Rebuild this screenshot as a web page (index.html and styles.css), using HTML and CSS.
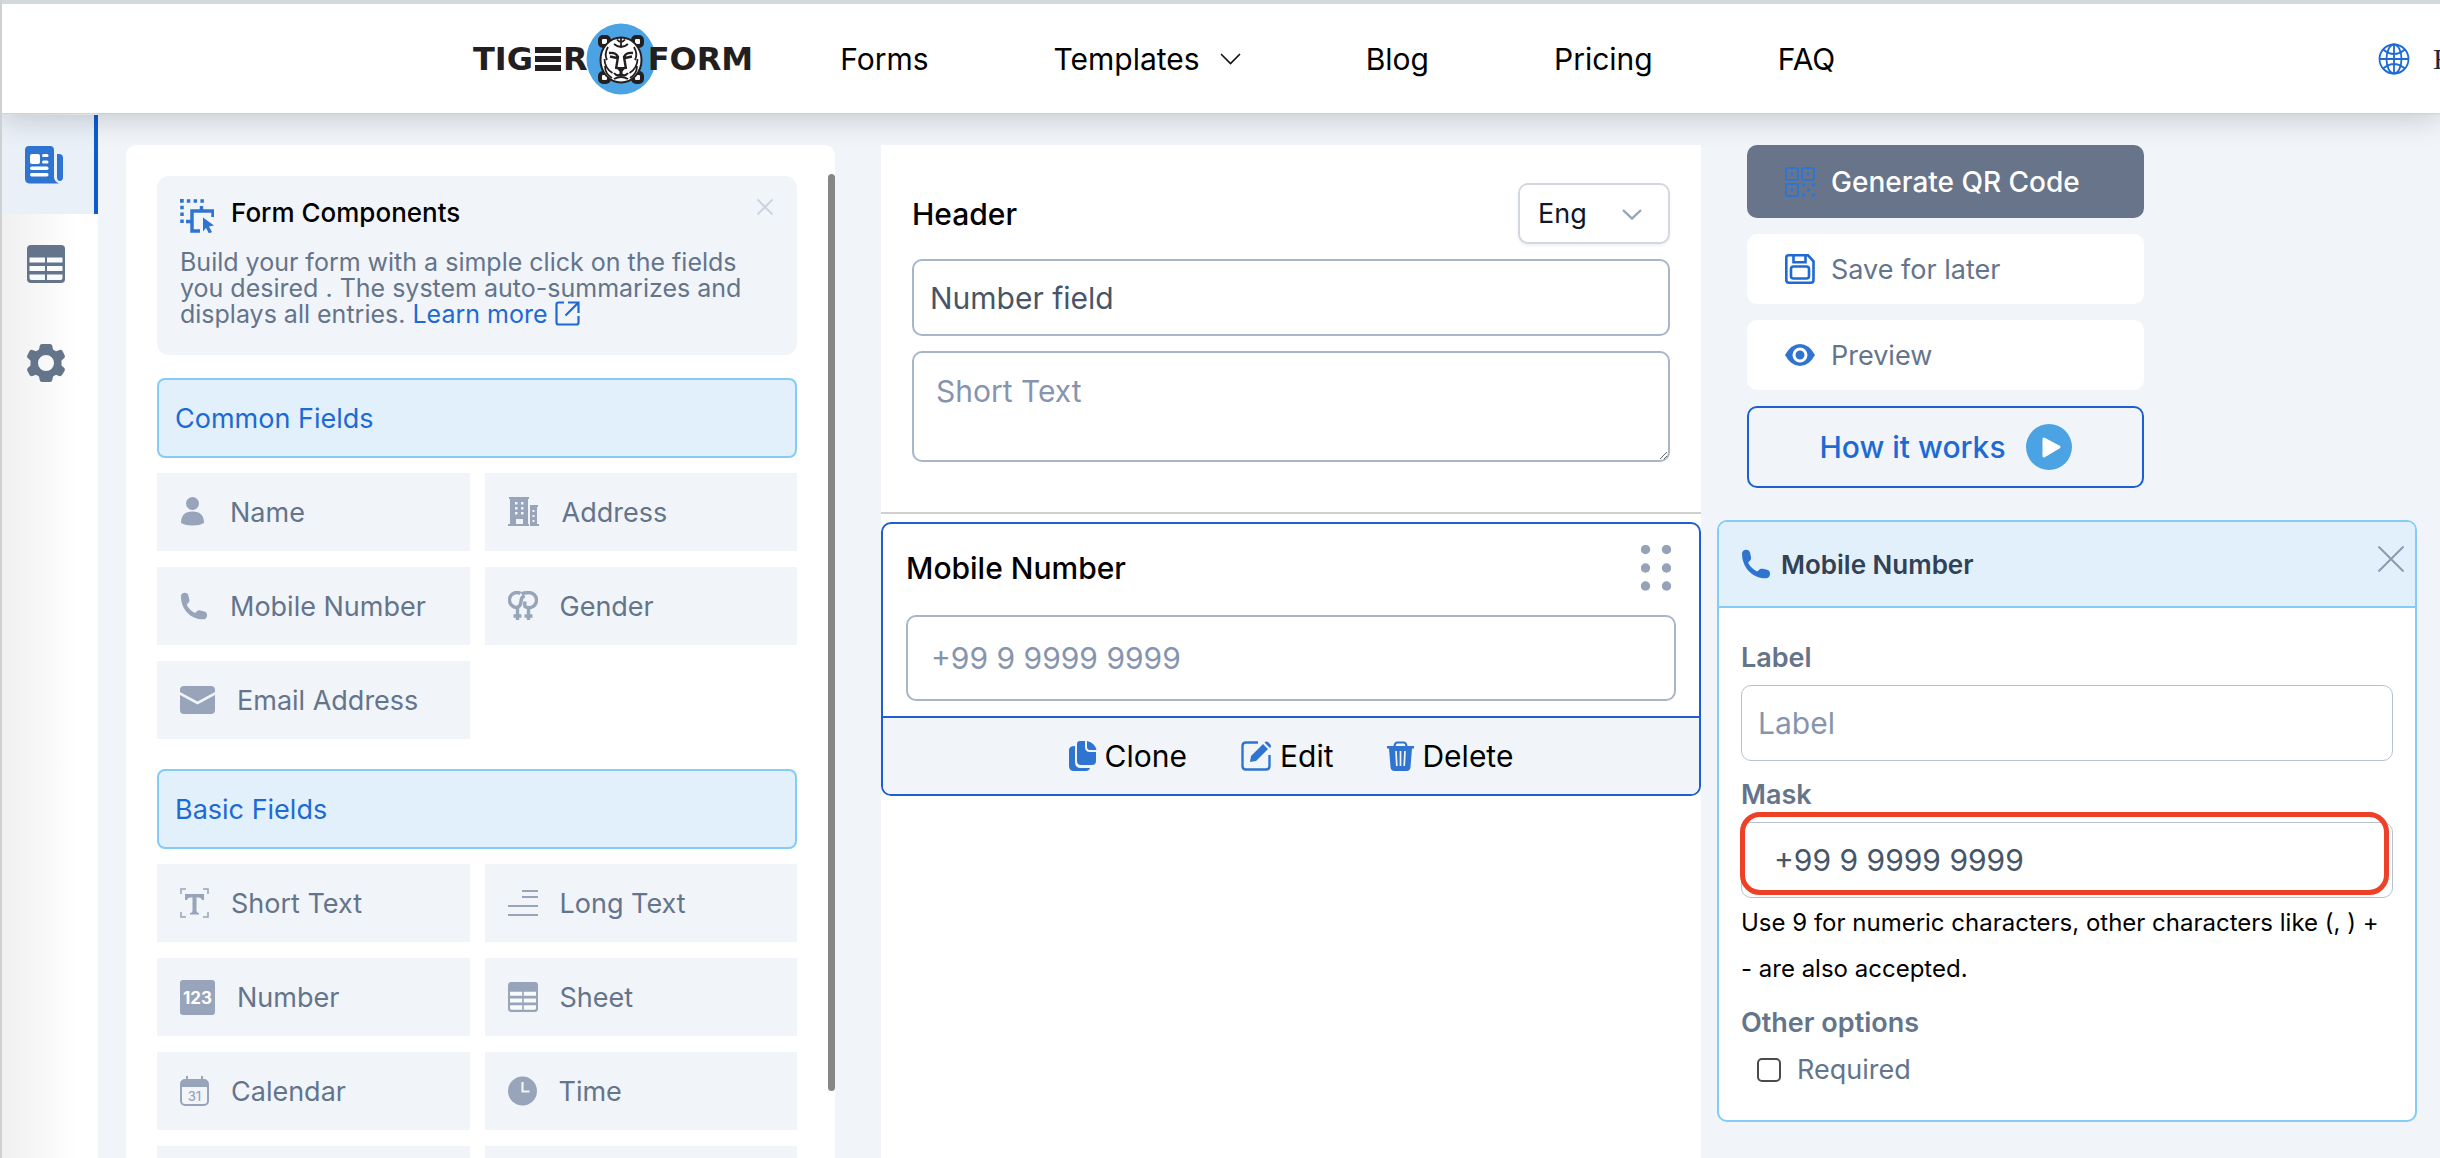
FILE: index.html
```html
<!DOCTYPE html>
<html lang="en">
<head>
    <meta charset="UTF-8">
    <meta name="viewport" content="width=device-width, initial-scale=1.0">
    <title>TIGER FORM</title>
    <link rel="stylesheet" href="styles.css">
</head>
<body>
    <svg class="sprite" aria-hidden="true">
        <symbol id="phone" viewBox="0 0 30 30">
            <path d="M1 4.500C1 2 3 .7 5 .7c2.500 0 3.500 1 4 3l1 4.300c.4 2-.3 3.300-2 4.500-.8.600-.8 1.300-.3 2.200 1.800 3 4.300 5.500 7.500 7.300.9.500 1.600.3 2.200-.5 1.200-1.600 2.600-2.200 4.600-1.700l4 1c2 .5 3 1.700 3 4 0 2.800-1.500 4.500-4.500 4.500C11 29.300 1 18 1 4.500z" fill="currentColor"/>
        </symbol>
        <symbol id="table" viewBox="0 0 38 38">
            <rect width="38" height="38" rx="4" fill="currentColor"/>
            <path d="M2.500 12.500h15.500v5H2.500zM20 12.500h15.500v5H20zM2.500 21h15.500v5H2.500zM20 21h15.500v5H20zM2.500 29.500h15.500v5.500H4.500q-2 0-2-2zM20 29.500h15.500v3.500q0 2-2 2H20z" fill="#f8fafc"/>
        </symbol>
    </svg>

    <header class="topbar">
        <a class="logo" href="#">
            <span>TIG</span>
            <svg class="logo-bars" width="26" height="24" viewBox="0 0 26 24" fill="#231f20"><path d="M0 0h26v6H0zM0 9h26v6H0zM0 18h26v6H0z"/></svg>
            <span>R</span>
            <svg class="logo-tiger" width="70" height="72" viewBox="0 0 70 72">
                <ellipse cx="35" cy="36" rx="34.500" ry="35.500" fill="#4ba3e3"/>
                <g fill="#fff" stroke="#231f20" stroke-width="4">
                    <rect x="14" y="14" width="9" height="9" rx="3"/><rect x="47" y="14" width="9" height="9" rx="3"/>
                    <rect x="14" y="50" width="9" height="9" rx="3"/><rect x="47" y="50" width="9" height="9" rx="3"/>
                </g>
                <ellipse cx="35" cy="37" rx="20.500" ry="22.500" fill="#fff" stroke="#231f20" stroke-width="2"/>
                <path d="M35 15v9M31 16.500q4 5 8 0M28 21q7 6 14 0M19 43q0 8 7 12M51 43q0 8-7 12M18.500 36q0 9 8 14M51.500 36q0 9-8 14M22 24q-4 7-1 13M48 24q4 7 1 13" fill="none" stroke="#231f20" stroke-width="1.800"/>
                <path d="M23 30q7-1 9 4l-2 12M47 30q-7-1-9 4l2 12M24 33.500l7 1.500M46 33.500l-7 1.500" fill="none" stroke="#231f20" stroke-width="2.400"/>
                <path d="M29.500 44h11l-4 4.500v3h-3v-3z" fill="#231f20"/>
                <path d="M28 50q3 4 7 1 4 3 7-1M28 56q7-4 14 0" fill="none" stroke="#231f20" stroke-width="2"/>
            </svg>
            <span>FORM</span>
        </a>
        <nav class="menu">
            <a href="#">Forms</a>
            <a href="#">Templates <svg width="21" height="12" viewBox="0 0 21 12" fill="none" stroke="#111" stroke-width="1.600"><path d="M1 1l9.500 9.500L20 1"/></svg></a>
            <a href="#">Blog</a>
            <a href="#">Pricing</a>
            <a href="#">FAQ</a>
        </nav>
        <a class="language" href="#">
            <svg width="32" height="32" viewBox="0 0 32 32" fill="none" stroke="#1d6ad4" stroke-width="1.800"><circle cx="16" cy="16" r="14.500"/><ellipse cx="16" cy="16" rx="7.500" ry="14.500"/><path d="M16 1.500v29M1.500 16h29M5 6.500q11 9 22 0M5 25.500q11-9 22 0"/></svg>
            <span>English</span>
        </a>
    </header>

    <main class="workspace">
        <aside class="sidebar">
            <button class="side-item active" aria-label="Form builder">
                <svg width="38" height="38" viewBox="0 0 38 38" fill="#2f74d0"><path d="M4 0h21q4 0 4 4v27q0 4 5 6.500H5q-5 0-5-5V4q0-4 4-4z"/><path d="M32 8h2q4 0 4 4v19q0 4-3 4t-3-4z"/><g fill="#fff"><rect x="5" y="8" width="10" height="10" rx="2"/><rect x="17" y="8" width="6.500" height="3" rx="1.500"/><rect x="17" y="14.500" width="6.500" height="3" rx="1.500"/><rect x="5" y="20.500" width="18.500" height="3.500" rx="1.700"/><rect x="5" y="27" width="18.500" height="3.500" rx="1.700"/></g></svg>
            </button>
            <button class="side-item" aria-label="Entries"><svg width="38" height="38"><use href="#table"/></svg></button>
            <button class="side-item" aria-label="Settings">
                <svg width="38" height="38" viewBox="0 0 38 38"><path fill="currentColor" fill-rule="evenodd" d="M15 0h8q2 0 2.300 2l.7 3.500 3 1.700 3.500-1.200q2-.6 3 1l2 4q1 2-.5 3.200L34.500 16.500v5l2.500 2.300q1.500 1.200.5 3.200l-2.500 4q-1 1.600-3 1L29 30.800l-3 1.700-.7 3.500q-.3 2-2.300 2h-8q-2 0-2.300-2l-.7-3.500-3-1.700L5.500 32q-2 .6-3-1l-2-4q-1-2 .5-3.200l2.500-2.300v-5L1 14.200Q-.5 13 .5 11l2-4q1-1.600 3-1L9 7.200l3-1.700.7-3.500Q13 0 15 0zM19 11a8 8 0 1 0 0 16 8 8 0 1 0 0-16z"/></svg>
            </button>
        </aside>

        <section class="components">
            <div class="scroll-thumb"></div>
            <div class="intro">
                <div class="intro-head">
                    <svg width="34" height="34" viewBox="0 0 34 34"><g fill="none" stroke="#2f74d0" stroke-width="3.500"><path d="M0 2h24M2 0v24" stroke-dasharray="3.500 3.300"/><path d="M21.500 7v5M6 22.500h5M33 18v-6H12v20h8"/></g><path d="M23 18.500l11 8-5 1 3 5.500-3 1.500-3-5.500-3 3.500z" fill="#2f74d0"/></svg>
                    <h2>Form Components</h2>
                    <button class="close" aria-label="Close"><svg width="16" height="16" viewBox="0 0 16 16" stroke="#cbd5e1" stroke-width="2"><path d="M.5.500l15 15M15.500.500l-15 15"/></svg></button>
                </div>
                <p>Build your form with a simple click on the fields you desired . The system auto-summarizes and displays all entries. <a href="#">Learn more <svg width="25" height="25" viewBox="0 0 25 25" fill="none" stroke="#1d6ad4" stroke-width="2.200"><path d="M9 1.500H3.500q-2 0-2 2V21.500q0 2 2 2h18q2 0 2-2V15M13 1.500h10.500V12M23 2L10.500 14.500"/></svg></a></p>
            </div>

            <h3 class="group-title">Common Fields</h3>
            <div class="tiles">
                <button><svg width="28" height="30" viewBox="0 0 28 30" fill="currentColor"><circle cx="12.500" cy="6.500" r="6.500"/><path d="M1 26q0-11.500 11.500-11.500T24 26q-4.500 2.500-11.500 2.500T1 26z"/></svg>Name</button>
                <button><svg width="32" height="30" viewBox="0 0 32 30"><path d="M1 0h20v2h-1v25h1v2H0v-2h2V2H1zM22 8h8v2h-1v17h2v2h-9z" fill="currentColor"/><path d="M7 5h2.500v2.500H7zM13 5h2.500v2.500H13zM7 10h2.500v2.500H7zM13 10h2.500v2.500H13zM7 15h2.500v2.500H7zM13 15h2.500v2.500H13zM8 22h7v5H8zM24.500 13h2v2h-2zM24.500 18h2v2h-2zM24.500 23h2v2h-2z" fill="#f1f5f9"/></svg>Address</button>
                <button><svg width="28" height="30"><use href="#phone"/></svg>Mobile Number</button>
                <button><svg width="30" height="30" viewBox="0 0 30 30" fill="none" stroke="currentColor" stroke-width="3.400"><path d="M12.500 2.400A7.500 7.500 0 1 0 9.500 16.500Q13 14.500 13 10.500T16.500 4.500"/><path d="M13.500 2.800Q15.500 1.800 19.500 1.800A7.500 7.500 0 1 1 17 15.500Q16.500 14 17 10.500"/><path d="M9.500 16v13M20.500 16v13M5.500 25h8M16.500 25h8"/></svg>Gender</button>
                <button><svg width="35" height="30" viewBox="0 0 35 30" fill="currentColor"><path d="M4 1h27q4 0 4 4v2L17.500 16.500 0 7V5q0-4 4-4zM0 10l17.500 9.500L35 10v15q0 4-4 4H4q-4 0-4-4z"/></svg>Email Address</button>
            </div>

            <h3 class="group-title">Basic Fields</h3>
            <div class="tiles">
                <button><svg width="29" height="30" viewBox="0 0 29 30"><path d="M6 1H1v5M23 1h5v5M1 24v5h5M28 24v5h-5" fill="none" stroke="currentColor" stroke-width="1.500"/><path d="M5 6h19v6h-2q-.5-2.500-3-2.500h-2.500V23q0 2 2.500 2v1.500h-9V25q2.500 0 2.500-2V9.500H10Q7.500 9.500 7 12H5z" fill="currentColor"/></svg>Short Text</button>
                <button><svg width="30" height="30" viewBox="0 0 30 30" stroke="currentColor" stroke-width="2"><path d="M14 3h16M14 9h16M0 18h30M0 27h30"/></svg>Long Text</button>
                <button><svg width="35" height="35" viewBox="0 0 35 35"><rect width="35" height="35" rx="3" fill="currentColor"/><text x="17.500" y="24" text-anchor="middle" class="icon-number">123</text></svg>Number</button>
                <button><svg width="30" height="30"><use href="#table"/></svg>Sheet</button>
                <button><svg width="29" height="30" viewBox="0 0 29 30"><rect x="1" y="4" width="27" height="25" rx="4" fill="none" stroke="currentColor" stroke-width="2"/><path d="M1 11V7q0-3 3-3h21q3 0 3 3v4zM6 0h2v5H6zM21 0h2v5h-2z" fill="currentColor"/><text x="14.500" y="25" text-anchor="middle" class="icon-date">31</text></svg>Calendar</button>
                <button><svg width="29" height="30" viewBox="0 0 29 30"><circle cx="14.500" cy="15" r="14.500" fill="currentColor"/><path d="M14.500 6v9.500h7" fill="none" stroke="#f1f5f9" stroke-width="2.200"/></svg>Time</button>
                <button></button>
                <button></button>
            </div>
        </section>

        <section class="form-canvas">
            <div class="form-head">
                <div class="form-head-row">
                    <label for="form-title">Header</label>
                    <div class="select-wrap">
                        <select aria-label="Form language"><option>Eng</option></select>
                        <svg width="20" height="11" viewBox="0 0 20 11" fill="none" stroke="#94a3b8" stroke-width="2.400"><path d="M1 1l9 8.500L19 1"/></svg>
                    </div>
                </div>
                <input type="text" id="form-title" value="Number field">
                <textarea placeholder="Short Text" aria-label="Description"></textarea>
            </div>
            <div class="field-card">
                <div class="field-body">
                    <div class="field-title">
                        <label for="mobile">Mobile Number</label>
                        <svg width="30" height="46" viewBox="0 0 30 46" fill="#94a3b8"><circle cx="4.500" cy="4.500" r="4.700"/><circle cx="25.500" cy="4.500" r="4.700"/><circle cx="4.500" cy="23" r="4.700"/><circle cx="25.500" cy="23" r="4.700"/><circle cx="4.500" cy="41" r="4.700"/><circle cx="25.500" cy="41" r="4.700"/></svg>
                    </div>
                    <input type="text" id="mobile" placeholder="+99 9 9999 9999">
                </div>
                <div class="field-actions">
                    <button><svg width="28" height="30" viewBox="0 0 28 30" fill="#2f74d0"><path d="M6 5v16q0 6 6 6h9q-1 3-4 3H5q-5 0-5-5V9q0-4 6-4z"/><path d="M11 0h5v6q0 5 5 5h6v9q0 4-4 4H12q-4 0-4-4V3q0-3 3-3zM18 0q8 2 9.500 9H21q-3 0-3-3z"/></svg>Clone</button>
                    <button><svg width="31" height="30" viewBox="0 0 31 30"><path d="M17 1.500H5q-3.500 0-3.500 3.500v20q0 3.500 3.500 3.500h20q3.500 0 3.500-3.500V14" fill="none" stroke="#2f74d0" stroke-width="2.400"/><path d="M9 21l1-6L22 3l5 5-12 12zM23.500 1.500q2-2 4 0l1.500 1.500q2 2 0 4z" fill="#2f74d0"/></svg>Edit</button>
                    <button><svg width="27" height="30" viewBox="0 0 27 30"><path d="M7.500 6q0-4.500 3-4.500h6q3 0 3 4.500" fill="none" stroke="#2f74d0" stroke-width="2.200"/><path d="M0 5h27v2.500h-2L23.500 26q-.3 4-4 4h-12q-3.700 0-4-4L2 7.500H0z" fill="#2f74d0"/><path d="M9 10l.8 15M13.500 10v15M18 10l-.8 15" stroke="#f1f5f9" stroke-width="1.700"/></svg>Delete</button>
                </div>
            </div>
        </section>

        <section class="settings">
            <div class="actions">
                <button class="generate"><svg width="30" height="30" viewBox="0 0 30 30" fill="none" stroke="#2f74d0" stroke-width="2"><rect x="1" y="1" width="12" height="12" rx="2"/><rect x="17" y="1" width="12" height="12" rx="2"/><rect x="1" y="17" width="12" height="12" rx="2"/><path d="M5.500 7h3M21.500 7h3M5.500 23h3M17 18h3M27 18h3M22 23h3M17 28h3M27 28h3" stroke-width="3"/></svg>Generate QR Code</button>
                <button><svg width="30" height="30" viewBox="0 0 30 30" fill="none" stroke="#1d6ad4" stroke-width="2.600"><path d="M3.500 1.300H23l5.500 6v19q0 2.400-2.500 2.400H4q-2.700 0-2.700-2.400V3.500q0-2.200 2.200-2.200zM8.500 1.300v7h12v-7"/><rect x="6" y="12.500" width="18" height="12" rx="2.500"/></svg>Save for later</button>
                <button><svg width="30" height="30" viewBox="0 0 30 30"><path d="M0 15Q6 4 15 4t15 11q-6 11-15 11T0 15z" fill="#2f74d0"/><circle cx="15" cy="15" r="6" fill="none" stroke="#fff" stroke-width="3"/></svg>Preview</button>
                <button class="how">How it works <svg width="46" height="46" viewBox="0 0 46 46"><circle cx="23" cy="23" r="23" fill="#4ba3e3"/><path d="M18 15l15 8-15 9z" fill="#fff" stroke="#fff" stroke-width="3" stroke-linejoin="round"/></svg></button>
            </div>

            <div class="properties">
                <div class="properties-head">
                    <svg width="30" height="30"><use href="#phone"/></svg>
                    <h2>Mobile Number</h2>
                    <button class="close" aria-label="Close"><svg width="26" height="26" viewBox="0 0 26 26" stroke="#8b9ab1" stroke-width="2"><path d="M.5.500l25 25M25.500.500l-25 25"/></svg></button>
                </div>
                <div class="properties-body">
                    <label for="prop-label">Label</label>
                    <input type="text" id="prop-label" placeholder="Label">
                    <label for="prop-mask">Mask</label>
                    <div class="mask">
                        <input type="text" id="prop-mask" value="+99 9 9999 9999">
                        <div class="highlight"></div>
                    </div>
                    <p class="hint">Use 9 for numeric characters, other characters like (, ) + - are also accepted.</p>
                    <h4>Other options</h4>
                    <div class="option">
                        <input type="checkbox" id="required">
                        <label for="required">Required</label>
                    </div>
                </div>
            </div>
        </section>
    </main>
</body>
</html>
```
FILE: styles.css
```css
* {
    box-sizing: border-box;
}
body {
    margin: 0;
    height: 100vh;
    display: flex;
    flex-direction: column;
    overflow: hidden;
    font-family: Inter, "Liberation Sans", sans-serif;
    font-size: 27px;
    color: #64748b;
    background-color: #f1f5f9;
    border-left: 2px solid #cdd1d4;
}
h2, h3, h4, p {
    margin: 0;
    font-weight: 400;
}
a {
    color: #1d6ad4;
    text-decoration: none;
}
svg {
    flex: none;
    display: block;
}
button, input, select, textarea {
    font-family: inherit;
    font-size: inherit;
    color: inherit;
}
button {
    border: none;
    background: none;
    padding: 0;
    cursor: pointer;
}
input[type="text"], textarea {
    display: block;
    width: 100%;
    border: 2px solid #a9b6c9;
    border-radius: 10px;
    background-color: #fff;
    color: #475569;
    font-size: 30px;
}
input::placeholder, textarea::placeholder {
    color: #8695ad;
    opacity: 1;
}
.sprite {
    display: none;
}

/* top bar */
.topbar {
    position: relative;
    z-index: 2;
    flex: none;
    height: 113px;
    padding-left: 471px;
    display: flex;
    align-items: center;
    border-top: 4px solid #d3d8db;
    background-color: #fff;
    box-shadow: 0 0 2px #b4c0cc, 0 4px 30px rgba(0, 0, 0, 0.2);
}
.logo {
    display: flex;
    align-items: center;
    font-family: "DejaVu Sans", sans-serif;
    font-weight: 700;
    font-size: 32px;
    color: #231f20;
}
.logo-bars {
    margin: 0 2px;
}
.logo-tiger {
    margin: 0 -8px 0 -2px;
}
.menu {
    display: flex;
    gap: 125px;
    margin-left: 87px;
}
.menu a {
    display: flex;
    align-items: center;
    gap: 20px;
    font-size: 30px;
    color: #000;
}
.language {
    display: flex;
    align-items: center;
    gap: 23px;
    width: 62px;
    margin-left: auto;
    overflow: hidden;
    font-family: "Liberation Serif", serif;
    font-size: 30px;
    color: #1e293b;
}

/* workspace */
.workspace {
    flex: 1;
    min-height: 0;
    display: grid;
    grid-template-columns: 96px minmax(0, 783fr) minmax(0, 820fr) minmax(0, 716fr);
    padding-right: 23px;
}
.sidebar {
    padding-top: 2px;
    background: linear-gradient(to right, #f0f0f0, #fff 80%);
}
.side-item {
    display: flex;
    align-items: center;
    width: 100%;
    height: 99px;
    padding-left: 25px;
    color: #64748b;
}
.side-item.active {
    padding-left: 23px;
    border-right: 4px solid #0d5bd0;
    background-color: #eaf0f8;
}

/* component list */
.components {
    position: relative;
    margin: 32px 46px 0 28px;
    padding: 31px 38px 0 31px;
    overflow: hidden;
    border-radius: 10px 10px 0 0;
    background-color: #fff;
}
.scroll-thumb {
    position: absolute;
    top: 29px;
    right: 0;
    width: 7px;
    height: 917px;
    border-radius: 4px;
    background-color: #868686;
}
.intro {
    height: 179px;
    padding: 19px 23px;
    border-radius: 12px;
    background-color: #f1f5f9;
}
.intro-head {
    display: flex;
    align-items: center;
    gap: 17px;
    height: 34px;
}
.intro-head svg {
    margin-top: 8px;
}
.intro-head .close svg {
    margin: 0 1px 10px 0;
}
.close {
    margin-left: auto;
}
.intro h2 {
    font-size: 26px;
    font-weight: 500;
    color: #000;
}
.intro p {
    margin-top: 20px;
    font-size: 25px;
    line-height: 26px;
}
.intro p svg {
    display: inline-block;
    vertical-align: -3px;
}
.group-title {
    margin: 23px 0 15px;
    height: 80px;
    padding: 0 16px;
    display: flex;
    align-items: center;
    border: 2px solid #84cbf6;
    border-radius: 8px;
    background-color: #e2f0fb;
    font-size: 27px;
    color: #1d6ad4;
}
.tiles {
    display: grid;
    grid-template-columns: 1fr 1fr;
    gap: 16px 15px;
    margin-bottom: 30px;
}
.tiles button {
    display: flex;
    align-items: center;
    gap: 22px;
    height: 78px;
    padding-left: 23px;
    background-color: #f1f5f9;
}
.tiles svg {
    color: #97a4b9;
}
.icon-number {
    font-size: 17px;
    font-weight: 700;
    fill: #fff;
}
.icon-date {
    font-size: 13px;
    font-weight: 500;
    fill: currentColor;
}

/* form canvas */
.form-canvas {
    margin-top: 32px;
    background-color: #fff;
}
.form-head {
    height: 369px;
    padding: 38px 31px 0;
    border-bottom: 2px solid #d0d0d0;
}
.form-head-row {
    display: flex;
    justify-content: space-between;
    align-items: center;
    margin-bottom: 15px;
    font-size: 30px;
    font-weight: 500;
    color: #000;
}
.select-wrap {
    position: relative;
}
.select-wrap svg {
    position: absolute;
    top: 26px;
    right: 28px;
    pointer-events: none;
}
select {
    appearance: none;
    width: 152px;
    height: 61px;
    padding: 0 18px;
    border: 2px solid #d3d8e0;
    border-radius: 10px;
    background-color: #fff;
    box-shadow: 0 2px 3px rgba(0, 0, 0, 0.06);
    font-size: 27px;
    color: #0f172a;
}
#form-title {
    height: 77px;
    padding: 0 16px;
}
textarea {
    height: 111px;
    margin-top: 15px;
    padding: 20px 22px;
}
.field-card {
    margin-top: 8px;
    border: 2px solid #1d5fd0;
    border-radius: 10px;
    overflow: hidden;
}
.field-body {
    padding: 21px 23px 15px;
}
.field-title {
    display: flex;
    justify-content: space-between;
    align-items: center;
    margin-bottom: 24px;
    padding-right: 5px;
    font-size: 30px;
    font-weight: 500;
    color: #000;
}
.field-body input[type="text"] {
    height: 86px;
    padding: 0 23px;
}
.field-actions {
    display: flex;
    justify-content: center;
    gap: 54px;
    height: 78px;
    border-top: 2px solid #1d5fd0;
    background-color: #f1f5f9;
    font-size: 30px;
    color: #000;
}
.field-actions button {
    display: flex;
    align-items: center;
    gap: 8px;
}

/* right column */
.settings {
    margin: 32px 0 0 16px;
}
.actions {
    display: flex;
    flex-direction: column;
    gap: 16px;
    width: 397px;
    margin-left: 30px;
}
.actions button {
    display: flex;
    align-items: center;
    gap: 16px;
    height: 70px;
    padding-left: 38px;
    border-radius: 10px;
    background-color: #fff;
}
.actions .generate {
    height: 73px;
    background-color: #677489;
    font-size: 28px;
    font-weight: 500;
    color: #fff;
}
.actions .how {
    justify-content: center;
    gap: 20px;
    height: 82px;
    padding-left: 0;
    border: 2px solid #1d5fd0;
    background-color: #f1f5f9;
    font-size: 30px;
    font-weight: 500;
    color: #1d6ad4;
}
.properties {
    margin-top: 32px;
    border: 2px solid #84cbf6;
    border-radius: 10px;
    overflow: hidden;
    background-color: #fff;
}
.properties-head {
    display: flex;
    align-items: center;
    gap: 10px;
    height: 86px;
    padding: 0 11px 0 22px;
    border-bottom: 2px solid #84cbf6;
    background-color: #e2f0fb;
    color: #2f74d0;
}
.properties-head h2 {
    font-size: 26px;
    font-weight: 600;
    color: #334155;
}
.properties-head .close svg {
    margin-bottom: 10px;
}
.properties-body {
    padding: 34px 22px 34px;
}
.properties-body > label, .properties-body h4 {
    display: block;
    font-weight: 600;
    line-height: 32px;
}
.properties-body input[type="text"] {
    height: 76px;
    margin: 11px 0 18px;
    padding: 0 16px;
    border: 1px solid #b8c1cf;
}
.mask {
    position: relative;
}
.properties-body .mask input[type="text"] {
    margin-bottom: 0;
    padding: 0 32px;
}
.highlight {
    position: absolute;
    top: -10px;
    right: 4px;
    bottom: 3px;
    left: -1px;
    border: 5px solid #ee4026;
    border-radius: 20px;
    pointer-events: none;
}
.hint {
    margin: 2px 0 15px;
    font-size: 24px;
    line-height: 46px;
    color: #000;
}
.option {
    display: flex;
    align-items: center;
    gap: 16px;
    margin: 14px 0 0 16px;
}
.option input {
    appearance: none;
    width: 24px;
    height: 24px;
    margin: 0;
    border: 2px solid #4b4b4b;
    border-radius: 5px;
    background-color: #fff;
}
```
